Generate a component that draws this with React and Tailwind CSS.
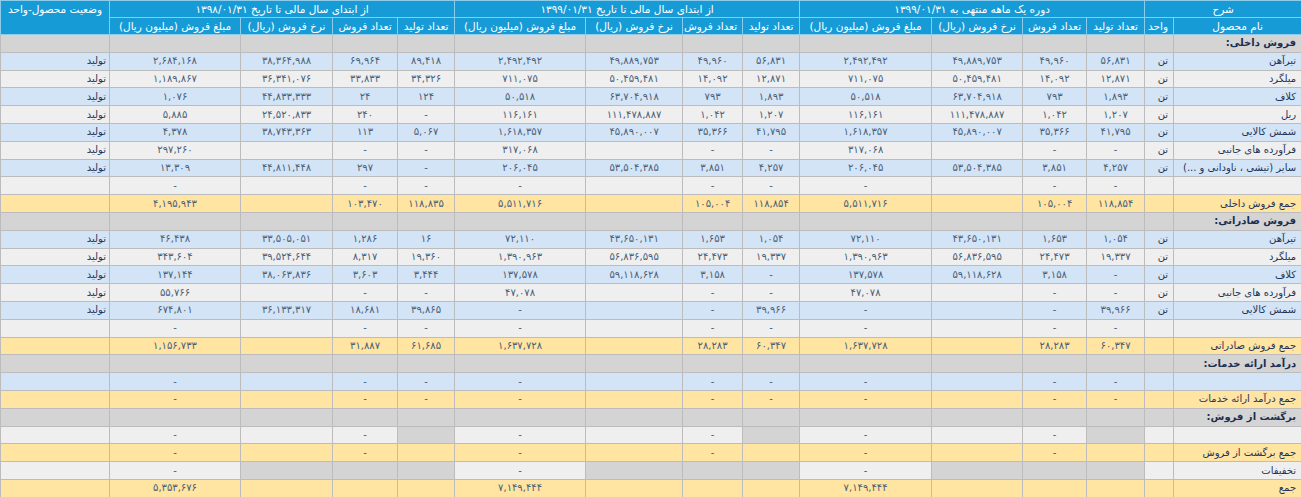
const colWidths = [
  'w-[128px]', 'w-[29px]',
  'w-[58px]', 'w-[64px]', 'w-[91px]', 'w-[132px]',
  'w-[57px]', 'w-[60px]', 'w-[97px]', 'w-[131px]',
  'w-[57px]', 'w-[65px]', 'w-[92px]', 'w-[131px]',
  'w-[109px]',
]

const groups = [
  'دوره یک ماهه منتهی به ۱۳۹۹/۰۱/۳۱',
  'از ابتدای سال مالی تا تاریخ ۱۳۹۹/۰۱/۳۱',
  'از ابتدای سال مالی تا تاریخ ۱۳۹۸/۰۱/۳۱',
]

const subHeads = ['تعداد تولید', 'تعداد فروش', 'نرخ فروش (ریال)', 'مبلغ فروش (میلیون ریال)']

const rowBg = {
  blue: 'bg-[#d3e4f6]',
  gray: 'bg-[#efefef]',
  yellow: 'bg-[#ffe4a2]',
  section: 'bg-[#d4d4d4]',
}

const dashes = ['-', '-', '', '-', '-', '-', '', '-', '-', '-', '', '-']
const salesOnly = ['', '-', '', '-', '', '-', '', '-', '', '-', '', '-']

// g1 and g2 are the same figures in the report, only g3 differs
const twice = (a, b) => [...a, ...a, ...b]

const rows = [
  { type: 'section', name: 'فروش داخلی:' },
  { bg: 'blue', name: 'تیرآهن', unit: 'تن', status: 'تولید', v: twice(['۵۶,۸۳۱', '۴۹,۹۶۰', '۴۹,۸۸۹,۷۵۳', '۲,۴۹۲,۴۹۲'], ['۸۹,۴۱۸', '۶۹,۹۶۴', '۳۸,۳۶۴,۹۸۸', '۲,۶۸۴,۱۶۸']) },
  { bg: 'gray', name: 'میلگرد', unit: 'تن', status: 'تولید', v: twice(['۱۲,۸۷۱', '۱۴,۰۹۲', '۵۰,۴۵۹,۴۸۱', '۷۱۱,۰۷۵'], ['۳۴,۳۲۶', '۳۳,۸۳۳', '۳۶,۳۴۱,۰۷۶', '۱,۱۸۹,۸۶۷']) },
  { bg: 'blue', name: 'کلاف', unit: 'تن', status: 'تولید', v: twice(['۱,۸۹۳', '۷۹۳', '۶۳,۷۰۴,۹۱۸', '۵۰,۵۱۸'], ['۱۲۴', '۲۴', '۴۴,۸۳۳,۳۳۳', '۱,۰۷۶']) },
  { bg: 'gray', name: 'ریل', unit: 'تن', status: 'تولید', v: twice(['۱,۲۰۷', '۱,۰۴۲', '۱۱۱,۴۷۸,۸۸۷', '۱۱۶,۱۶۱'], ['-', '۲۴۰', '۲۴,۵۲۰,۸۳۳', '۵,۸۸۵']) },
  { bg: 'blue', name: 'شمش کالایی', unit: 'تن', status: 'تولید', v: twice(['۴۱,۷۹۵', '۳۵,۳۶۶', '۴۵,۸۹۰,۰۰۷', '۱,۶۱۸,۳۵۷'], ['۵,۰۶۷', '۱۱۳', '۳۸,۷۴۳,۳۶۳', '۴,۳۷۸']) },
  { bg: 'gray', name: 'فرآورده های جانبی', unit: 'تن', status: 'تولید', v: twice(['-', '-', '', '۳۱۷,۰۶۸'], ['-', '-', '', '۲۹۷,۲۶۰']) },
  { bg: 'blue', name: 'سایر (تیشی ، ناودانی و ...)', unit: 'تن', status: 'تولید', v: twice(['۴,۲۵۷', '۳,۸۵۱', '۵۳,۵۰۴,۳۸۵', '۲۰۶,۰۴۵'], ['-', '۲۹۷', '۴۴,۸۱۱,۴۴۸', '۱۳,۳۰۹']) },
  { bg: 'gray', v: dashes },
  { bg: 'yellow', name: 'جمع فروش داخلی', v: twice(['۱۱۸,۸۵۴', '۱۰۵,۰۰۴', '', '۵,۵۱۱,۷۱۶'], ['۱۱۸,۸۳۵', '۱۰۳,۴۷۰', '', '۴,۱۹۵,۹۴۳']) },

  { type: 'section', name: 'فروش صادراتی:' },
  { bg: 'blue', name: 'تیرآهن', unit: 'تن', status: 'تولید', v: twice(['۱,۰۵۴', '۱,۶۵۳', '۴۳,۶۵۰,۱۳۱', '۷۲,۱۱۰'], ['۱۶', '۱,۲۸۶', '۳۳,۵۰۵,۰۵۱', '۴۶,۴۳۸']) },
  { bg: 'gray', name: 'میلگرد', unit: 'تن', status: 'تولید', v: twice(['۱۹,۳۳۷', '۲۴,۴۷۳', '۵۶,۸۳۶,۵۹۵', '۱,۳۹۰,۹۶۳'], ['۱۹,۳۶۰', '۸,۳۱۷', '۳۹,۵۲۴,۶۴۴', '۳۴۳,۶۰۴']) },
  { bg: 'blue', name: 'کلاف', unit: 'تن', status: 'تولید', v: twice(['-', '۳,۱۵۸', '۵۹,۱۱۸,۶۲۸', '۱۳۷,۵۷۸'], ['۳,۴۴۴', '۳,۶۰۳', '۳۸,۰۶۳,۸۳۶', '۱۳۷,۱۴۴']) },
  { bg: 'gray', name: 'فرآورده های جانبی', unit: 'تن', status: 'تولید', v: twice(['-', '-', '', '۴۷,۰۷۸'], ['-', '-', '', '۵۵,۷۶۶']) },
  { bg: 'blue', name: 'شمش کالایی', unit: 'تن', status: 'تولید', v: twice(['۳۹,۹۶۶', '-', '', '-'], ['۳۹,۸۶۵', '۱۸,۶۸۱', '۳۶,۱۳۳,۳۱۷', '۶۷۴,۸۰۱']) },
  { bg: 'gray', v: dashes },
  { bg: 'yellow', name: 'جمع فروش صادراتی', v: twice(['۶۰,۳۴۷', '۲۸,۲۸۳', '', '۱,۶۳۷,۷۲۸'], ['۶۱,۶۸۵', '۳۱,۸۸۷', '', '۱,۱۵۶,۷۳۳']) },

  { type: 'section', name: 'درآمد ارائه خدمات:' },
  { bg: 'blue', v: dashes },
  { bg: 'yellow', name: 'جمع درآمد ارائه خدمات', v: dashes },

  { type: 'section', name: 'برگشت از فروش:' },
  { bg: 'gray', v: salesOnly, dark: [0, 4, 8] },
  { bg: 'yellow', name: 'جمع برگشت از فروش', v: salesOnly },
  { bg: 'gray', name: 'تخفیفات', v: ['', '', '', '-', '', '', '', '-', '', '', '', '-'], dark: [0, 1, 2, 4, 5, 6, 8, 9, 10] },
  { bg: 'yellow', name: 'جمع', v: ['', '', '', '۷,۱۴۹,۴۴۴', '', '', '', '۷,۱۴۹,۴۴۴', '', '', '', '۵,۳۵۳,۶۷۶'] },
]

const cell = 'border border-[#bcbcbc] px-[5px] whitespace-nowrap overflow-hidden'
const head = 'border border-[#8dcbea] px-[5px] font-normal text-white whitespace-nowrap overflow-hidden'

export default function App() {
  return (
    <div className="w-[1301px] h-[497px] overflow-hidden bg-white" style={{ fontFamily: '"DejaVu Sans", sans-serif' }}>
      <table dir="rtl" className="w-[1301px] table-fixed border-collapse text-[10px] leading-none">
        <colgroup>
          {colWidths.map((w, i) => (
            <col key={i} className={w} />
          ))}
        </colgroup>
        <thead className="bg-[#179bd7] text-[10.5px]">
          <tr className="h-[17px]">
            <th colSpan={2} className={`${head} text-center`}>شرح</th>
            {groups.map((g) => (
              <th key={g} colSpan={4} className={`${head} text-center`}>{g}</th>
            ))}
            <th rowSpan={2} className={`${head} text-center align-top pt-[3px]`}>وضعیت محصول-واحد</th>
          </tr>
          <tr className="h-[17px]">
            <th className={`${head} text-center`}>نام محصول</th>
            <th className={`${head} text-center px-0`}>واحد</th>
            {groups.map((g) =>
              subHeads.map((s) => (
                <th key={g + s} className={`${head} text-center`}>{s}</th>
              ))
            )}
          </tr>
        </thead>
        <tbody>
          {rows.map((r, i) => {
            if (r.type === 'section') {
              return (
                <tr key={i} className={`h-[17.8px] ${rowBg.section}`}>
                  <td className={`${cell} text-right font-bold text-[#1b2f52]`}>{r.name}</td>
                  {Array.from({ length: 14 }).map((_, j) => (
                    <td key={j} className={cell} />
                  ))}
                </tr>
              )
            }
            return (
              <tr key={i} className={`h-[17.8px] ${rowBg[r.bg]}`}>
                <td className={`${cell} text-right text-[#1f3557]`}>{r.name}</td>
                <td className={`${cell} text-right text-[#1f3557] px-[4px]`}>{r.unit}</td>
                {r.v.map((val, j) => (
                  <td
                    key={j}
                    className={`${cell} text-center text-[#4a5e78] ${r.dark && r.dark.includes(j) ? 'bg-[#d4d4d4]' : ''}`}
                  >
                    {val}
                  </td>
                ))}
                <td className={`${cell} text-right text-[#1f3557] pr-[3px]`}>{r.status}</td>
              </tr>
            )
          })}
        </tbody>
      </table>
    </div>
  )
}
